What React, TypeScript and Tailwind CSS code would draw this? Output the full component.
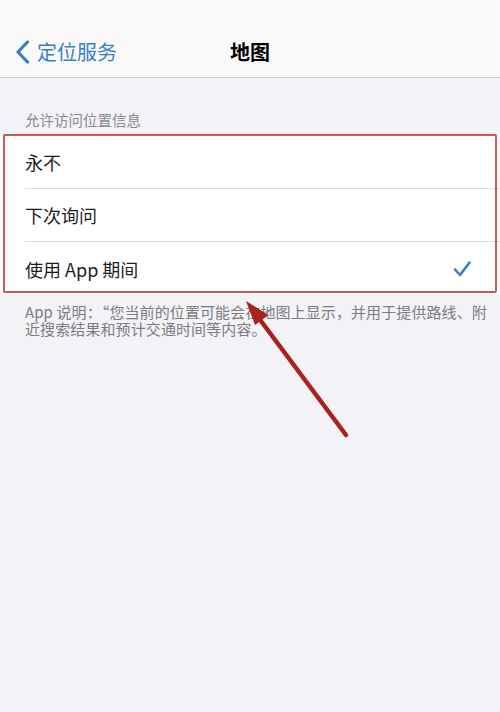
import React from "react";

const font = { fontFamily: '"Noto Sans CJK SC", "Noto Sans", sans-serif' };

function Row({ label, checked, last }: { label: string; checked?: boolean; last?: boolean }) {
  return (
    <div className="pl-[25px] bg-white">
      <div
        className={
          "h-[53px] flex items-center justify-between pr-[28px] " +
          (last ? "" : "border-b border-[#dcdce0]")
        }
      >
        <span className="text-[18px] text-[#1c1c1e] leading-none">{label}</span>
        {checked && (
          <svg width="18" height="18" viewBox="0 0 18 18" className="mr-[1px]">
            <path d="M2 9.5 L7 15 L16.5 2.5" fill="none" stroke="#3a7fc1" strokeWidth="2.6" strokeLinecap="round" strokeLinejoin="round" />
          </svg>
        )}
      </div>
    </div>
  );
}

export default function App() {
  return (
    <div className="relative w-[500px] h-[712px] bg-[#f2f2f7] overflow-hidden" style={font}>
      <div className="h-[78px] bg-[#f9f9fa] border-b border-[#cfcfd3] pt-[27px]">
        <div className="relative h-[50px] flex items-center">
          <div className="flex items-center pl-[15px] gap-[7px]">
            <svg width="15" height="24" viewBox="0 0 15 24">
              <path d="M12.5 2 L3 12 L12.5 22" fill="none" stroke="#3a7fc1" strokeWidth="3.2" strokeLinecap="round" strokeLinejoin="round" />
            </svg>
            <span className="text-[20px] text-[#3a7fc1] leading-none">定位服务</span>
          </div>
          <div className="absolute inset-0 flex items-center justify-center">
            <span className="text-[20px] font-bold text-black leading-none">地图</span>
          </div>
        </div>
      </div>

      <div className="pt-[32px] pl-[25px] h-[52px]">
        <span className="text-[14.5px] text-[#8a8a8e] leading-[20px] block">允许访问位置信息</span>
      </div>
      <div className="relative mt-[6px]">
        <Row label="永不" />
        <Row label="下次询问" />
        <Row label="使用 App 期间" checked last />
        <div className="absolute left-[3px] right-[3px] top-[-2px] bottom-[2px] border-2 border-[#c95a52] rounded-[2px]" />
      </div>

      <div className="pl-[25px] pr-[4px] mt-[8px] text-[15px] leading-[17px] text-[#7c7c80] tracking-[0.1px]">
        App 说明：“您当前的位置可能会在地图上显示，并用于提供路线、附近搜索结果和预计交通时间等内容。
      </div>

      <svg className="absolute inset-0 pointer-events-none" width="500" height="712" viewBox="0 0 500 712">
        <line x1="346" y1="435" x2="258" y2="317" stroke="#a8231d" strokeWidth="4.5" strokeLinecap="round" />
        <polygon points="246,301 268.5,315 255,325" fill="#a8231d" />
      </svg>
    </div>
  );
}
